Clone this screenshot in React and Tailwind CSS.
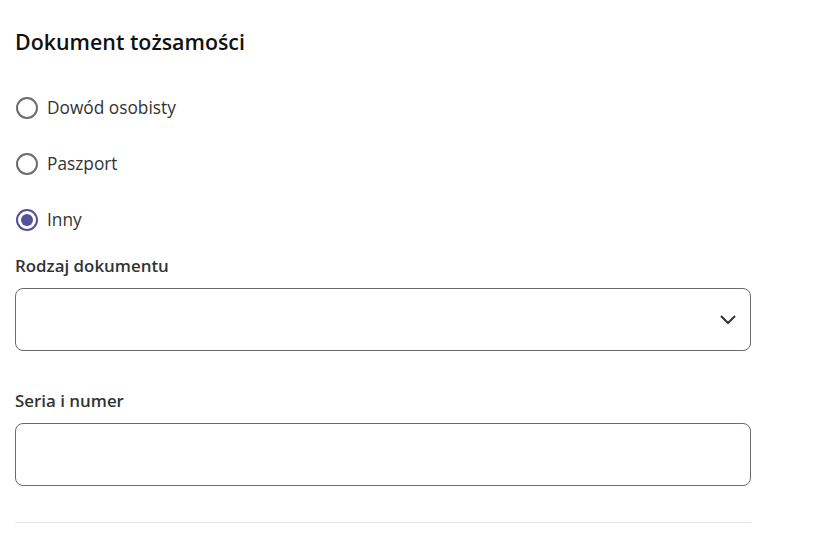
import React, { useState } from "react";

const options = ["Dowód osobisty", "Paszport", "Inny"];

function Radio({ label, checked, onSelect }) {
  return (
    <label className="ml-[1px] flex h-[56px] cursor-pointer items-center gap-[9px]" onClick={onSelect}>
      <span
        className={`flex h-[22px] w-[22px] items-center justify-center rounded-full border-2 ${
          checked ? "border-[#525199]" : "border-[#6b6b6b]"
        }`}
      >
        {checked && <span className="h-[12px] w-[12px] rounded-full bg-[#525199]" />}
      </span>
      <span className="text-[17.3px] text-[#333333]">{label}</span>
    </label>
  );
}

export default function App() {
  const [selected, setSelected] = useState("Inny");

  return (
    <div className="min-h-screen bg-white px-[15px] font-['Open_Sans',sans-serif]">
      <h2 className="pt-[28px] text-[21.4px] font-semibold leading-[28px] text-[#111111]">Dokument tożsamości</h2>

      <div className="mt-[24px] flex flex-col">
        {options.map((o) => (
          <Radio key={o} label={o} checked={selected === o} onSelect={() => setSelected(o)} />
        ))}
      </div>

      <div className="w-[736px]">
        <p className="mt-[6px] text-[16.9px] font-semibold leading-[24px] text-[#333333]">Rodzaj dokumentu</p>
        <div className="mt-[10px] flex h-[63px] items-center justify-end rounded-[8px] border border-[#6b6b6b] pr-[14px]">
          <svg width="16" height="10" viewBox="0 0 16 10" fill="none">
            <path d="M1.5 1.5L8 8L14.5 1.5" stroke="#333333" strokeWidth="2" strokeLinecap="round" strokeLinejoin="round" />
          </svg>
        </div>

        <p className="mt-[38px] text-[16.9px] font-semibold leading-[24px] text-[#333333]">Seria i numer</p>
        <input
          type="text"
          className="mt-[10px] block h-[63px] w-full rounded-[8px] border border-[#6b6b6b] px-[14px] text-[16px] outline-none"
        />

        <div className="mt-[36px] h-px bg-[#e8e8e8]" />
      </div>
    </div>
  );
}
